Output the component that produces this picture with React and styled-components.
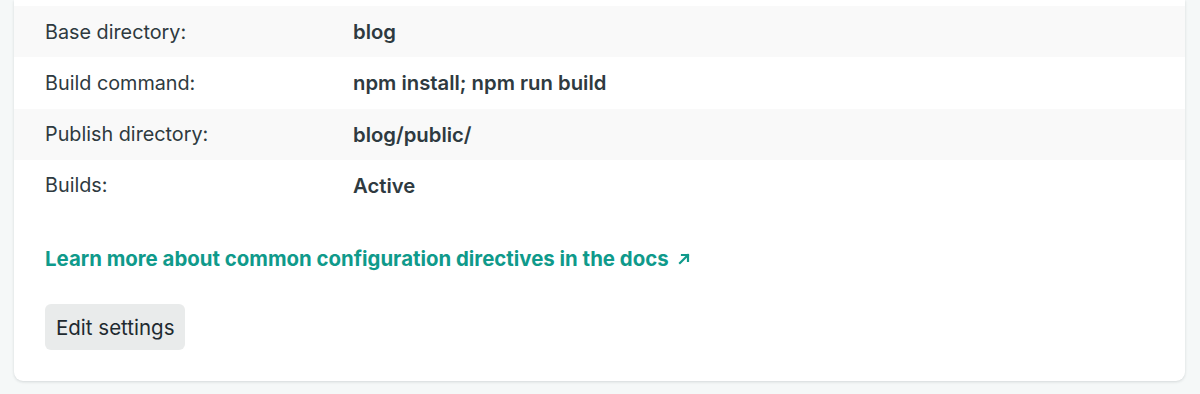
import React from 'react'
import styled, { createGlobalStyle } from 'styled-components'

const Global = createGlobalStyle`
body{
margin:0;
background:#f5f8f8;
font-family:Inter, "Noto Sans", sans-serif;
-webkit-font-smoothing:antialiased;
}
`;
const Page = styled.div`
padding:0 15px 13px 14px;
`;
const Card = styled.div`
background:#fff;
border-radius:0 0 9px 9px;
box-shadow:0 1px 3px rgba(14,30,37,0.14);
padding:6px 0 31px;
`;
const Row = styled.div`
display:grid;
grid-template-columns:308px 1fr;
align-items:center;
height:51.25px;
padding-left:31px;
background:${props => props.striped ? "#f9f9f9" : "#fff"};
font-size:19.8px;
color:#2e3a40;
`;
const Label = styled.span`
font-weight:400;
`;
const Value = styled.span`
font-weight:600;
font-size:20.3px;
`;
const Footer = styled.div`
padding:36px 31px 0;
display:flex;
flex-direction:column;
align-items:flex-start;
gap:33px;
`;
const DocsLink = styled.a`
display:inline-flex;
align-items:center;
gap:9px;
font-size:20.4px;
line-height:24px;
font-weight:700;
color:#0f9a8b;
text-decoration:none;
`;
const Button = styled.button`
font-family:inherit;
font-size:20.5px;
color:#1e2a30;
background:#e9ebeb;
border:none;
border-radius:6px;
height:46px;
padding:0 11px;
cursor:pointer;
`;

const rows = [
  ["Base directory:", "blog"],
  ["Build command:", "npm install; npm run build"],
  ["Publish directory:", "blog/public/"],
  ["Builds:", "Active"],
];

const App = () => (
  <Page>
    <Global />
    <Card>
      {rows.map(([label, value], i) => (
        <Row key={label} striped={i % 2 === 0}>
          <Label>{label}</Label>
          <Value>{value}</Value>
        </Row>
      ))}
      <Footer>
        <DocsLink href="#">
          Learn more about common configuration directives in the docs
          <svg width="12" height="12" viewBox="0 0 12 12" fill="none" stroke="currentColor" strokeWidth="2.2" strokeLinecap="square">
            <path d="M2 10L10 2M4 2h6v6" />
          </svg>
        </DocsLink>
        <Button>Edit settings</Button>
      </Footer>
    </Card>
  </Page>
)

export default App
